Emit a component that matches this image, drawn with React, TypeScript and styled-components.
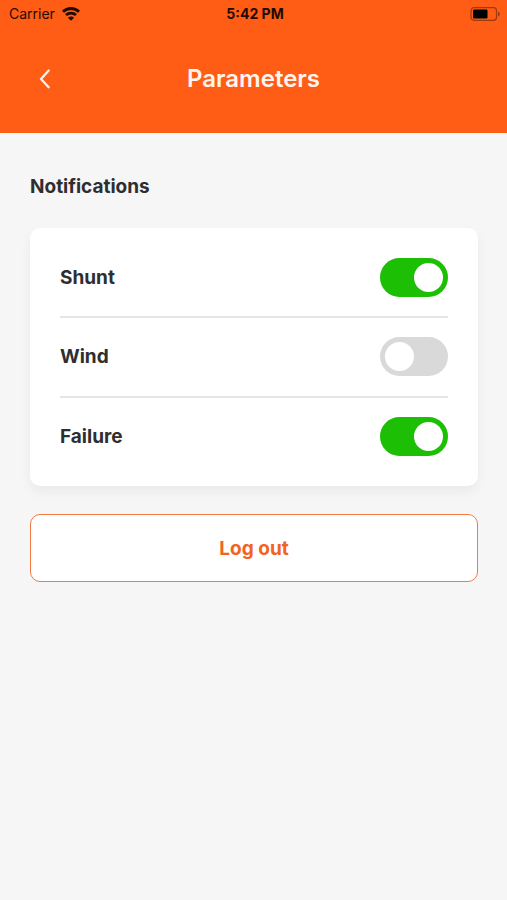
import { useState } from "react";
import styled, { createGlobalStyle } from "styled-components";

const GlobalStyle = createGlobalStyle`
  *, *::before, *::after { box-sizing: border-box; }
  body {
    margin: 0;
    background: #f6f6f6;
    color: #2e2e30;
    font-family: Inter, "Liberation Sans", sans-serif;
  }
`;

const Header = styled.header`
  background: #ff5c16;
  color: #fff5ee;
`;

const StatusBar = styled.div`
  display: grid;
  grid-template-columns: 1fr auto 1fr;
  align-items: center;
  height: 27px;
  padding: 0 6px 0 9px;
  color: #210b02;
  font-size: 14px;
  line-height: 18px;
`;

const Carrier = styled.span`
  display: flex;
  align-items: center;
  gap: 7px;
`;

const Clock = styled.time`
  font-weight: 700;
`;

const Battery = styled.svg`
  justify-self: end;
`;

const TitleBar = styled.div`
  display: grid;
  grid-template-columns: 30px 1fr 30px;
  align-items: center;
  height: 106px;
  padding: 0 30px 2px;
`;

const BackButton = styled.button`
  display: flex;
  align-items: center;
  justify-content: center;
  height: 44px;
  padding: 0;
  border: 0;
  background: none;
  color: inherit;
  cursor: pointer;
`;

const Title = styled.h1`
  margin: 0;
  font-size: 24px;
  line-height: 32px;
  font-weight: 600;
  text-align: center;
`;

const Content = styled.main`
  padding: 41px 29px 30px 30px;
`;

const SectionTitle = styled.h2`
  margin: 0 0 28px;
  font-size: 19px;
  line-height: 26px;
  font-weight: 700;
`;

const Card = styled.div`
  padding: 10px 30px;
  border-radius: 10px;
  background: #fff;
  box-shadow: 0 6px 12px rgba(0, 0, 0, 0.05);
`;

const SettingRow = styled.label`
  display: flex;
  align-items: center;
  justify-content: space-between;
  padding: 20px 0 19px;
  font-size: 19px;
  line-height: 26px;
  font-weight: 700;
  cursor: pointer;

  & + & {
    padding-bottom: 20px;
    padding-top: 19px;
    border-top: 2px solid #e6e6e6;
  }
`;

const Switch = styled.input`
  appearance: none;
  display: flex;
  align-items: center;
  width: 68px;
  height: 39px;
  margin: 0;
  padding: 0 5px;
  border-radius: 20px;
  background: #d9d9d9;
  cursor: pointer;

  &::before {
    content: "";
    width: 29px;
    height: 29px;
    border-radius: 50%;
    background: #fff;
  }

  &:checked {
    justify-content: flex-end;
    background: #1cbf04;
  }
`;

const LogoutButton = styled.button`
  display: block;
  width: 100%;
  height: 68px;
  margin-top: 28px;
  border: 1px solid #f37a45;
  border-radius: 10px;
  background: #fff;
  color: #f26322;
  font-family: inherit;
  font-size: 19px;
  font-weight: 700;
  cursor: pointer;
`;

const initialSettings = [
  { name: "Shunt", enabled: true },
  { name: "Wind", enabled: false },
  { name: "Failure", enabled: true },
];

function WifiIcon() {
  return (
    <svg width="18" height="14" viewBox="0 0 18 14" fill="none" stroke="currentColor" strokeWidth="2.8" aria-hidden="true">
      <path d="M1 4.7C5.5.4 12.5.4 17 4.7" />
      <path d="M4 8.1c2.8-2.7 7.2-2.7 10 0" />
      <path d="M9 13.8 5.9 10.7c1.8-1.7 4.4-1.7 6.2 0z" fill="currentColor" stroke="none" />
    </svg>
  );
}

function BatteryIcon() {
  return (
    <Battery width="31" height="14" viewBox="0 0 31 14" fill="none" role="img" aria-label="Battery">
      <rect x="1" y="0.7" width="25.5" height="12.6" rx="3" stroke="#9c3a10" strokeWidth="1.2" />
      <rect x="3" y="2.5" width="14.5" height="9" rx="1.2" fill="#000" />
      <path d="M28 4.8c2.4.6 2.4 4 0 4.6z" fill="#9c3a10" />
    </Battery>
  );
}

export default function App() {
  const [settings, setSettings] = useState(initialSettings);

  const toggle = (name: string) =>
    setSettings((current) =>
      current.map((item) => (item.name === name ? { ...item, enabled: !item.enabled } : item))
    );

  return (
    <>
      <GlobalStyle />
      <Header>
        <StatusBar>
          <Carrier>
            Carrier
            <WifiIcon />
          </Carrier>
          <Clock>5:42 PM</Clock>
          <BatteryIcon />
        </StatusBar>
        <TitleBar>
          <BackButton type="button" aria-label="Back">
            <svg width="12" height="20" viewBox="0 0 12 20" fill="none" stroke="currentColor" strokeWidth="2.3" strokeLinecap="round" strokeLinejoin="round" aria-hidden="true">
              <path d="M9.7 1.5 2 10l7.7 8.2" />
            </svg>
          </BackButton>
          <Title>Parameters</Title>
        </TitleBar>
      </Header>
      <Content>
        <SectionTitle>Notifications</SectionTitle>
        <Card>
          {settings.map(({ name, enabled }) => (
            <SettingRow key={name}>
              {name}
              <Switch type="checkbox" role="switch" checked={enabled} onChange={() => toggle(name)} />
            </SettingRow>
          ))}
        </Card>
        <LogoutButton type="button">Log out</LogoutButton>
      </Content>
    </>
  );
}
